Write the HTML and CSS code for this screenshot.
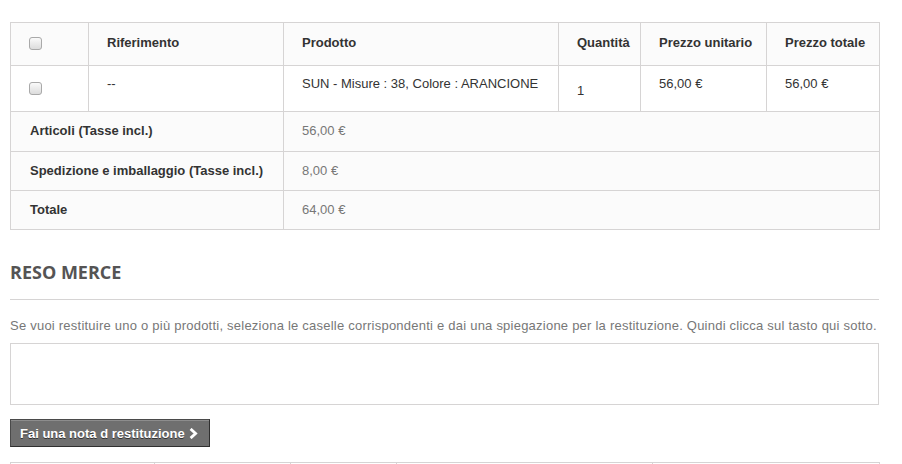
FILE: index.html
```html
<!DOCTYPE html>
<html lang="it">
<head>
<meta charset="utf-8">
<title>Dettaglio ordine</title>
<link rel="stylesheet" href="styles.css">
</head>
<body>
<div class="page">
  <table class="order">
    <colgroup>
      <col class="c1"><col class="c2"><col class="c3"><col class="c4"><col class="c5"><col class="c6">
    </colgroup>
    <thead>
      <tr class="head">
        <th class="chk"><span class="box"></span></th>
        <th>Riferimento</th>
        <th>Prodotto</th>
        <th>Quantità</th>
        <th>Prezzo unitario</th>
        <th>Prezzo totale</th>
      </tr>
    </thead>
    <tbody>
      <tr class="item">
        <td class="chk"><span class="box"></span></td>
        <td>--</td>
        <td>SUN - Misure : 38, Colore : ARANCIONE</td>
        <td class="qty">1</td>
        <td>56,00 €</td>
        <td>56,00 €</td>
      </tr>
    </tbody>
    <tfoot>
      <tr class="sum r1">
        <td colspan="2" class="lbl">Articoli (Tasse incl.)</td>
        <td colspan="4" class="val">56,00 €</td>
      </tr>
      <tr class="sum">
        <td colspan="2" class="lbl">Spedizione e imballaggio (Tasse incl.)</td>
        <td colspan="4" class="val">8,00 €</td>
      </tr>
      <tr class="sum">
        <td colspan="2" class="lbl">Totale</td>
        <td colspan="4" class="val">64,00 €</td>
      </tr>
    </tfoot>
  </table>

  <h3 class="title">RESO MERCE</h3>
  <p class="info">Se vuoi restituire uno o più prodotti, seleziona le caselle corrispondenti e dai una spiegazione per la restituzione. Quindi clicca sul tasto qui sotto.</p>
  <div class="area"></div>
  <button class="btn">Fai una nota d restituzione <svg class="chev" viewBox="0 0 9 11" width="9" height="11"><path d="M1.6 0.9 L6.6 5.5 L1.6 10.1" fill="none" stroke="#fff" stroke-width="2.8"/></svg></button>

  <table class="next">
    <tr>
      <td class="n1"></td><td class="n2"></td><td class="n3"></td><td class="n4"></td><td class="n5"></td>
    </tr>
  </table>
</div>
</body>
</html>
```
FILE: styles.css
```css
html, body {
  margin: 0;
  padding: 0;
  background: #fff;
}
body {
  font-family: Arial, "Liberation Sans", Helvetica, sans-serif;
  font-size: 13px;
  color: #777;
}
.page {
  width: 869px;
  padding: 22px 0 0 10px;
}
.order {
  width: 870px;
  border-collapse: collapse;
  table-layout: fixed;
}
.c1 { width: 78px; }
.c2 { width: 195px; }
.c3 { width: 275px; }
.c4 { width: 82px; }
.c5 { width: 126px; }
.c6 { width: 113px; }
.order th, .order td {
  border: 1px solid #d6d4d4;
  text-align: left;
  color: #333;
  padding: 0 8px 0 18px;
  line-height: 18px;
}
.order th {
  font-weight: bold;
  background: #fbfbfb;
  height: 40px;
  vertical-align: middle;
}
.head th { padding-top: 0; padding-bottom: 2px; }
.item td {
  height: 46px;
  vertical-align: top;
  padding-top: 9px;
  padding-bottom: 0;
  box-sizing: border-box;
}
.order .chk {
  padding-left: 18px;
}
.item .chk, .item .qty {
  vertical-align: middle;
  padding-top: 0;
}
.item .qty { padding-top: 4px; }
.box {
  display: block;
  width: 11px;
  height: 11px;
  border: 1px solid #a9a9a9;
  border-radius: 3px;
  background: linear-gradient(#fafafa, #dcdcdc);
}
.head .box { margin-top: 0; }
.item .box { margin-top: 0; }
.sum td {
  background: #fbfbfb;
  height: 37px;
  vertical-align: middle;
  padding-top: 0;
  padding-bottom: 1px;
}
.sum.r1 td { height: 38px; }
.sum .lbl {
  font-weight: bold;
  padding-left: 19px;
}
.sum .val {
  color: #777;
  padding-left: 18px;
}
.title {
  font-family: "Open Sans", sans-serif;
  font-weight: 700;
  font-size: 18px;
  color: #555454;
  margin: 24px 0 0 0;
  line-height: 36px;
  padding-bottom: 9px;
  border-bottom: 1px solid #d6d4d4;
}
.info {
  margin: 17px 0 0 0;
  line-height: 18px;
  color: #777;
  letter-spacing: 0.23px;
  white-space: nowrap;
}
.area {
  margin-top: 8px;
  height: 60px;
  border: 1px solid #d6d4d4;
}
.btn {
  display: flex;
  align-items: center;
  gap: 4px;
  margin-top: 14px;
  height: 28px;
  width: 200px;
  padding: 0 0 0 9px;
  background: #6f6f6f;
  border: 1px solid;
  border-color: #4a4a4a #2f2f2f #2f2f2f #4a4a4a;
  box-shadow: inset 0 1px 0 #8d8d8d;
  color: #fff;
  font-family: Arial, "Liberation Sans", sans-serif;
  font-weight: bold;
  font-size: 13px;
  text-shadow: 0 1px 0 #333;
  cursor: pointer;
}
.chev { display: block; margin-top: 1px; }
.next {
  margin-top: 15px;
  width: 870px;
  border-collapse: collapse;
  table-layout: fixed;
}
.next td {
  border: 1px solid #d6d4d4;
  height: 30px;
  padding: 0;
}
.n1 { width: 143px; }
.n2 { width: 135px; }
.n3 { width: 105px; }
.n4 { width: 255px; }
```
